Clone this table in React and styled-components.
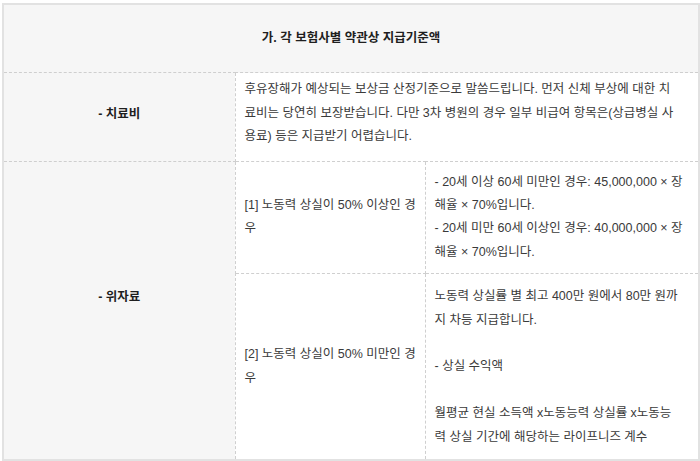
import React from 'react';
import styled, { createGlobalStyle } from 'styled-components';

const GlobalStyle = createGlobalStyle`
  body {
    margin: 0;
    background: #ffffff;
    font-family: "Liberation Sans", "Noto Sans CJK KR", sans-serif;
  }
`;

const Page = styled.div`
  padding: 3px 2px 0 2px;
`;

const Table = styled.table`
  width: 696px;
  table-layout: fixed;
  border-collapse: collapse;
  border: 2px solid #e2e2e2;
  font-size: 12.5px;
  line-height: 23.4px;
  color: #3a3a3a;
`;

const Cell = styled.td`
  border: 1px dashed #cfcfcf;
  padding: ${(p) => p.$pad || '9px 12px 9px 9px'};
  vertical-align: middle;
  text-align: ${(p) => (p.$head ? 'center' : 'left')};
  background: ${(p) => (p.$head ? '#f6f6f6' : '#ffffff')};
  font-weight: ${(p) => (p.$head ? 700 : 400)};
  color: ${(p) => (p.$head ? '#1f1f1f' : '#3a3a3a')};
`;

const rows = [
  {
    label: '[1] 노동력 상실이 50% 이상인 경우',
    pad: '9px 15px 9px 9px',
    lines: [
      '- 20세 이상 60세 미만인 경우: 45,000,000 × 장해율 × 70%입니다.',
      '- 20세 미만 60세 이상인 경우: 40,000,000 × 장해율 × 70%입니다.',
    ],
  },
  {
    label: '[2] 노동력 상실이 50% 미만인 경우',
    pad: '11px 17px 10px 9px',
    lines: [
      '노동력 상실률 별 최고 400만 원에서 80만 원까지 차등 지급합니다.',
      '',
      '- 상실 수익액',
      '',
      '월평균 현실 소득액 x노동능력 상실률 x노동능력 상실 기간에 해당하는 라이프니즈 계수',
    ],
  },
];

function Lines({ items }) {
  return items.map((t, i) => (
    <React.Fragment key={i}>
      {t}
      {i < items.length - 1 && <br />}
    </React.Fragment>
  ));
}

export default function App() {
  return (
    <Page>
      <GlobalStyle />
      <Table>
        <colgroup>
          <col style={{ width: '232px' }} />
          <col style={{ width: '190px' }} />
          <col style={{ width: '274px' }} />
        </colgroup>
        <tbody>
          <tr>
            <Cell $head colSpan={3} $pad="22px 10px">
              가. 각 보험사별 약관상 지급기준액
            </Cell>
          </tr>
          <tr>
            <Cell $head $pad="5px 9px 9px">- 치료비</Cell>
            <Cell colSpan={2} $pad="5px 20px 12px 9px">
              후유장해가 예상되는 보상금 산정기준으로 말씀드립니다. 먼저 신체 부상에 대한 치료비는 당연히 보장받습니다. 다만 3차 병원의 경우 일부 비급여 항목은(상급병실 사용료) 등은 지급받기 어렵습니다.
            </Cell>
          </tr>
          {rows.map((r, i) => (
            <tr key={i}>
              {i === 0 && (
                <Cell $head rowSpan={rows.length} $pad="9px 9px 35px">
                  - 위자료
                </Cell>
              )}
              <Cell $pad="9px 4px 9px 9px">{r.label}</Cell>
              <Cell $pad={r.pad}>
                <Lines items={r.lines} />
              </Cell>
            </tr>
          ))}
        </tbody>
      </Table>
    </Page>
  );
}
